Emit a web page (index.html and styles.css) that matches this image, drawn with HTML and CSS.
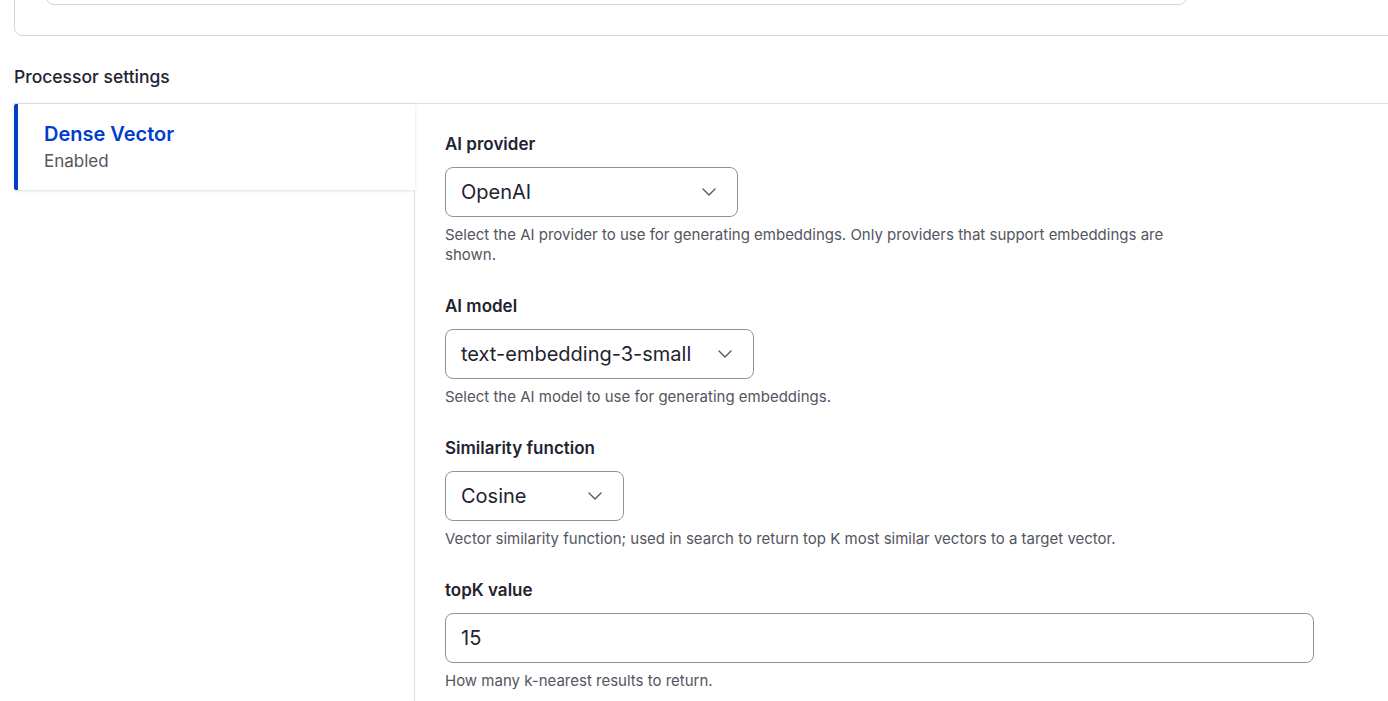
FILE: index.html
```html
<!DOCTYPE html>
<html>

<head>
    <meta charset="UTF-8">
    <title>Processor settings</title>
    <link rel="stylesheet" href="styles.css">
</head>

<body>
    <div class="page">
        <div class="card">
            <div class="text-input text-input--wide"></div>
        </div>

        <h2 class="section-title">Processor settings</h2>

        <div class="vertical-tabs">
            <div class="tabs-menu">
                <div class="tabs-menu__item is-selected">
                    <span class="tabs-menu__title">Dense Vector</span>
                    <span class="tabs-menu__summary">Enabled</span>
                </div>
                <div class="tabs-menu__rest"></div>
            </div>

            <div class="tabs-pane">
                <div class="form-item">
                    <label class="form-item__label">AI provider</label>
                    <div class="select select--provider">
                        <span>OpenAI</span>
                        <svg width="14" height="8" viewBox="0 0 14 8"><path d="M1 1l6 6 6-6" fill="none" stroke="#545560" stroke-width="1.4" stroke-linecap="round" stroke-linejoin="round"/></svg>
                    </div>
                    <div class="form-item__description">Select the AI provider to use for generating embeddings. Only providers that support embeddings are shown.</div>
                </div>

                <div class="form-item">
                    <label class="form-item__label">AI model</label>
                    <div class="select select--model">
                        <span>text-embedding-3-small</span>
                        <svg width="14" height="8" viewBox="0 0 14 8"><path d="M1 1l6 6 6-6" fill="none" stroke="#545560" stroke-width="1.4" stroke-linecap="round" stroke-linejoin="round"/></svg>
                    </div>
                    <div class="form-item__description">Select the AI model to use for generating embeddings.</div>
                </div>

                <div class="form-item">
                    <label class="form-item__label">Similarity function</label>
                    <div class="select select--similarity">
                        <span>Cosine</span>
                        <svg width="14" height="8" viewBox="0 0 14 8"><path d="M1 1l6 6 6-6" fill="none" stroke="#545560" stroke-width="1.4" stroke-linecap="round" stroke-linejoin="round"/></svg>
                    </div>
                    <div class="form-item__description">Vector similarity function; used in search to return top K most similar vectors to a target vector.</div>
                </div>

                <div class="form-item">
                    <label class="form-item__label">topK value</label>
                    <div class="text-input text-input--topk">15</div>
                    <div class="form-item__description">How many k-nearest results to return.</div>
                </div>
            </div>
        </div>
    </div>
</body>

</html>
```

FILE: styles.css
```css
body {
    margin: 0;
    overflow: hidden;
    background: #fff;
    color: #222330;
    font-family: Inter, "Noto Sans", sans-serif;
}

.page {
    width: 1420px;
    padding-left: 14px;
}

/* fieldset card above, scrolled mostly out of view */
.card {
    margin-top: -62px;
    padding: 16px 31px 30px;
    border: 1px solid #d3d4d9;
    border-radius: 8px;
}

.text-input {
    box-sizing: border-box;
    height: 50px;
    padding: 0 15px;
    border: 1px solid #919297;
    border-radius: 8px;
    font-size: 20px;
    line-height: 48px;
}

.text-input--wide {
    width: 1141px;
    border-color: #d3d4d9;
}

.text-input--topk {
    width: 869px;
}

.section-title {
    margin: 29px 0 14px;
    font-size: 17.5px;
    font-weight: 500;
    line-height: 24px;
}

/* vertical tabs */
.vertical-tabs {
    display: flex;
    border-top: 1px solid #dedfe4;
}

.tabs-menu {
    display: flex;
    flex-direction: column;
    width: 401px;
    flex-shrink: 0;
}

.tabs-menu__item {
    display: flex;
    flex-direction: column;
    gap: 4px;
    padding: 18px 20px 18px 26px;
    border-left: 4px solid #003ecc;
    border-radius: 2px 0 0 2px;
    box-shadow: 0 1px 3px rgba(0, 0, 0, 0.12);
}

.tabs-menu__title {
    color: #003ecc;
    font-size: 20px;
    font-weight: 600;
    line-height: 24px;
}

.tabs-menu__summary {
    color: #545560;
    font-size: 17px;
    line-height: 22px;
}

.tabs-menu__rest {
    flex: 1;
    min-height: 520px;
    border-right: 1px solid #dedfe4;
}

.tabs-pane {
    flex: 1;
    padding: 28px 30px 0;
}

.form-item {
    margin-bottom: 29px;
}

.form-item__label {
    display: block;
    margin-bottom: 11px;
    font-size: 17px;
    font-weight: 600;
    line-height: 24px;
}

.select {
    box-sizing: border-box;
    display: flex;
    align-items: center;
    justify-content: space-between;
    height: 50px;
    padding: 0 21px 0 15px;
    border: 1px solid #919297;
    border-radius: 8px;
    font-size: 20px;
}

.select--provider {
    width: 293px;
}

.select--model {
    width: 309px;
}

.select--similarity {
    width: 179px;
}

.form-item__description {
    max-width: 740px;
    margin-top: 8px;
    color: #545560;
    font-size: 15px;
    line-height: 20px;
}
```
